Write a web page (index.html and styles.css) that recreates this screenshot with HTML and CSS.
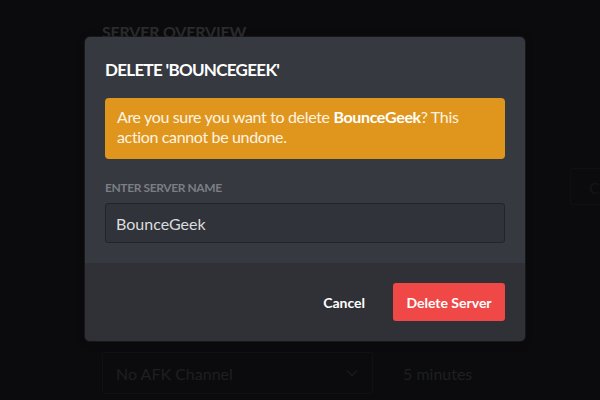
FILE: index.html
```html
<!DOCTYPE html>
<html>
<head>
<meta charset="utf-8">
<link rel="stylesheet" href="styles.css">
</head>
<body>
<div class="page">
  <h2 class="page-title">SERVER OVERVIEW</h2>
  <div class="region-row">
    <div class="region-box">C</div>
  </div>
  <div class="afk-row">
    <div class="select">
      <span>No AFK Channel</span>
      <svg class="chev" width="12" height="8" viewBox="0 0 12 8"><path d="M1 1.5l5 5 5-5" fill="none" stroke="#18191c" stroke-width="1.6"/></svg>
    </div>
    <div class="timeout">5 minutes</div>
  </div>
</div>

<div class="modal">
  <div class="modal-body">
    <h3 class="modal-title">DELETE 'BOUNCEGEEK'</h3>
    <div class="warning">Are you sure you want to delete <b>BounceGeek</b>? This action cannot be undone.</div>
    <label class="field-label">ENTER SERVER NAME</label>
    <div class="input">BounceGeek</div>
  </div>
  <div class="modal-footer">
    <button class="btn-cancel">Cancel</button>
    <button class="btn-delete">Delete Server</button>
  </div>
</div>
</body>
</html>
```

FILE: styles.css
```css
html, body {
  margin: 0;
  padding: 0;
}
body {
  width: 600px;
  height: 400px;
  overflow: hidden;
  background: #0b0b0d;
  font-family: Lato, "Open Sans", sans-serif;
  position: relative;
}
.page {
  padding: 22px 0 0 102px;
  display: flex;
  flex-direction: column;
}
.page-title {
  margin: 0;
  font-size: 16px;
  line-height: 20px;
  font-weight: 700;
  color: #2a2b2f;
  letter-spacing: -0.2px;
}
.region-row {
  display: flex;
  justify-content: flex-end;
  margin-top: 126px;
}
.region-box {
  width: 30px;
  height: 37px;
  border: 1px solid #0f1013;
  border-right: none;
  border-radius: 3px 0 0 3px;
  color: #141518;
  font-size: 16px;
  line-height: 37px;
  padding-left: 18px;
  box-sizing: border-box;
}
.afk-row {
  display: flex;
  align-items: center;
  margin-top: 147px;
}
.select {
  width: 271px;
  height: 42px;
  box-sizing: border-box;
  border: 1px solid #101114;
  border-radius: 3px;
  display: flex;
  align-items: center;
  justify-content: space-between;
  padding: 0 14px 0 13px;
  color: #1e1f22;
  font-size: 16px;
}
.timeout {
  margin-left: 30px;
  color: #1e1f22;
  font-size: 16px;
}

.modal {
  position: absolute;
  left: 85px;
  top: 37px;
  width: 440px;
  border-radius: 5px;
  overflow: hidden;
  background: #36393f;
  box-shadow: 0 0 0 1px rgba(32,34,37,0.6), 0 2px 10px rgba(0,0,0,0.2);
}
.modal-body {
  padding: 22px 20px 20px;
  display: flex;
  flex-direction: column;
}
.modal-title {
  margin: 0;
  font-size: 17px;
  line-height: 22px;
  font-weight: 700;
  color: #ffffff;
  letter-spacing: -0.7px;
}
.warning {
  margin-top: 17px;
  background: #e0961c;
  border-radius: 4px;
  padding: 9px 12px 12px;
  color: #fdf3e3;
  font-size: 16px;
  line-height: 20px;
  letter-spacing: -0.35px;
}
.warning b {
  color: #ffffff;
  font-weight: 700;
}
.field-label {
  margin-top: 21px;
  font-size: 12px;
  line-height: 16px;
  font-weight: 700;
  color: #7b7e84;
  letter-spacing: -0.4px;
}
.input {
  margin-top: 7px;
  height: 40px;
  box-sizing: border-box;
  background: #303339;
  border: 1px solid #222428;
  border-radius: 3px;
  padding: 0 10px;
  display: flex;
  align-items: center;
  color: #dcddde;
  font-size: 16px;
}
.modal-footer {
  background: #2f3136;
  padding: 20px 20px 20px;
  display: flex;
  justify-content: flex-end;
  align-items: center;
  gap: 6px;
}
.btn-cancel, .btn-delete {
  font-family: Lato, "Open Sans", sans-serif;
  font-size: 14px;
  font-weight: 700;
  border: none;
  height: 38px;
  border-radius: 3px;
  cursor: pointer;
}
.btn-cancel {
  background: transparent;
  color: #ffffff;
  padding: 0 22px;
}
.btn-delete {
  background: #f04747;
  color: #ffffff;
  width: 112px;
  padding: 0;
}
```
